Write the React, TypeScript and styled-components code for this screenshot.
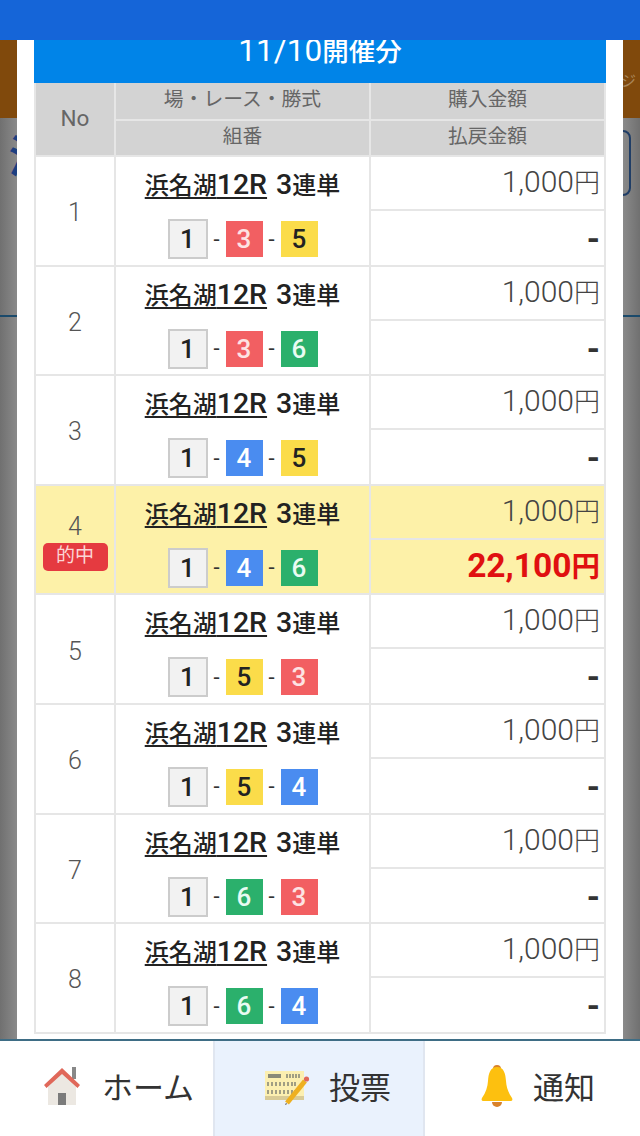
import React from "react";
import styled, { createGlobalStyle } from "styled-components";

const FONT = `Roboto, "Noto Sans CJK JP", sans-serif`;
const LINE = "#e6e6e6";

const Global = createGlobalStyle`
  html, body { margin: 0; padding: 0; background: #808080; }
  * { box-sizing: border-box; }
`;

const Stage = styled.div`
  position: relative;
  width: 640px;
  height: 1136px;
  overflow: hidden;
  font-family: ${FONT};
  background: linear-gradient(90deg, #707070 0, #8a8a8a 17px, #8a8a8a 623px, #707070 640px);
  display: flex;
  flex-direction: column;
`;

const TopBar = styled.header`
  position: relative;
  z-index: 3;
  height: 40px;
  flex: none;
  background: #1565d8;
`;

const Band = styled.div`
  height: 78px;
  flex: none;
  background: #80490c;
  display: flex;
  justify-content: flex-end;
  align-items: center;
  padding-right: 4px;
  font-size: 15px;
  color: #a8855a;
`;

const BackHead = styled.div`
  height: 199px;
  flex: none;
  border-bottom: 2px solid #1b4a6b;
  display: flex;
  justify-content: space-between;
  padding: 12px 9px 0 9px;
`;

const BackTitle = styled.div`
  width: 40px;
  height: 66px;
  font-size: 44px;
  line-height: 56px;
  font-weight: 700;
  color: #1d3f80;
  border-bottom: 8px solid #1d3f80;
  border-image: linear-gradient(90deg, #1d3f80 8px, transparent 8px) 8;
`;

const BackButton = styled.div`
  width: 40px;
  height: 66px;
  border: 2px solid #1f3d66;
  border-radius: 8px;
`;

const Modal = styled.section`
  position: absolute;
  z-index: 2;
  top: 40px;
  left: 17px;
  width: 606px;
  height: 1000px;
  background: #fff;
  padding: 0 17px;
`;

const Title = styled.h2`
  margin: 0;
  height: 43px;
  padding-bottom: 2px;
  background: #0084e8;
  color: #fff;
  font-size: 26.5px;
  font-weight: 500;
  line-height: 22px;
  text-align: center;
`;

const TitleDate = styled.span`
  font-size: 31.5px;
  font-weight: 400;
`;

const Table = styled.div`
  border-left: 2px solid ${LINE};
  border-right: 2px solid ${LINE};
`;

const HeadRow = styled.div`
  display: grid;
  grid-template-columns: 78px 253px 1fr;
  grid-template-rows: 36px 34px;
  height: 74px;
  gap: 2px;
  background: ${LINE};
  border-bottom: 2px solid ${LINE};
`;

const HeadCell = styled.div<{ $tall?: boolean }>`
  background: #d3d3d3;
  color: #666;
  font-size: ${(p) => (p.$tall ? "22.5px" : "19.8px")};
  display: flex;
  align-items: center;
  justify-content: center;
  padding-bottom: ${(p) => (p.$tall ? "2px" : "8px")};
  grid-row: ${(p) => (p.$tall ? "span 2" : "auto")};
`;

const Row = styled.div<{ $hit?: boolean }>`
  display: grid;
  grid-template-columns: 78px 253px 1fr;
  column-gap: 2px;
  height: 109.6px;
  background: ${LINE};
  border-bottom: 2px solid ${LINE};
  --cell: ${(p) => (p.$hit ? "#fdf1a8" : "#fff")};
`;

const NoCell = styled.div`
  background: var(--cell);
  display: flex;
  flex-direction: column;
  align-items: center;
  justify-content: center;
  padding-top: 4px;
  color: #555;
  font-size: 25px;
  font-weight: 300;
`;

const HitBadge = styled.span`
  width: 65px;
  height: 28px;
  margin-top: 2px;
  margin-bottom: 1px;
  border-radius: 5px;
  background: #e53a40;
  color: #fbd5d5;
  font-size: 19px;
  font-weight: 400;
  line-height: 25px;
  text-align: center;
`;

const RaceCell = styled.div`
  background: var(--cell);
  display: flex;
  flex-direction: column;
  align-items: center;
  padding-top: 11px;
`;

const RaceLine = styled.div`
  height: 34px;
  font-size: 24px;
  line-height: 34px;
  font-weight: 500;
  color: #222;
  white-space: nowrap;
`;

const RaceLink = styled.span`
  text-decoration: underline;
  text-underline-offset: 3px;
  margin-right: 9px;
`;

const RaceLatin = styled.span`
  font-size: 28.5px;
  font-weight: 500;
`;

const Boats = styled.div`
  margin-top: 17px;
  display: flex;
  align-items: center;
  height: 40px;
`;

const Dash = styled.span`
  width: 18px;
  text-align: center;
  font-size: 22px;
  color: #333;
`;

const BOAT: Record<string, { bg: string; fg: string }> = {
  "3": { bg: "#f25f62", fg: "#fde3e3" },
  "4": { bg: "#4a8cf0", fg: "#fff" },
  "5": { bg: "#fbdc4a", fg: "#222" },
  "6": { bg: "#2bb06c", fg: "#e9fbf2" },
};

const FirstBoat = styled.span`
  width: 40px;
  height: 40px;
  border: 2px solid #ccc;
  background: #f2f2f2;
  color: #222;
  font-size: 26px;
  font-weight: 500;
  display: flex;
  align-items: center;
  justify-content: center;
`;

const Boat = styled.span<{ $n: string }>`
  width: 37px;
  height: 36px;
  background: ${(p) => BOAT[p.$n].bg};
  color: ${(p) => BOAT[p.$n].fg};
  font-size: 26px;
  font-weight: 500;
  display: flex;
  align-items: center;
  justify-content: center;
`;

const AmountCell = styled.div`
  display: grid;
  grid-template-rows: 52px 1fr;
  row-gap: 2px;
`;

const Amount = styled.div`
  background: var(--cell);
  display: flex;
  justify-content: flex-end;
  align-items: baseline;
  padding: 7px 4px 0 0;
  color: #444;
  font-size: 26px;
  line-height: 36px;
  font-weight: 300;
`;

const AmountLatin = styled.span`
  font-size: 30px;
`;

const Payout = styled.div`
  background: var(--cell);
  display: flex;
  justify-content: flex-end;
  align-items: baseline;
  padding: 9px 4px 0 0;
  color: #333;
  font-size: 28.5px;
  line-height: 38px;
  font-weight: 700;
`;

const PayoutHit = styled(Payout)`
  padding-top: 7px;
  color: #e01010;
`;

const PayoutLatin = styled.span`
  font-size: 33.5px;
`;

const Nav = styled.nav`
  position: absolute;
  z-index: 3;
  left: 0;
  right: 0;
  bottom: 0;
  height: 97px;
  background: #fff;
  border-top: 2px solid #3e6d85;
  display: grid;
  grid-template-columns: 213px 212px 1fr;
`;

const Tab = styled.div<{ $active?: boolean; $gap: number; $pad: number }>`
  display: flex;
  align-items: center;
  gap: ${(p) => p.$gap}px;
  padding-left: ${(p) => p.$pad}px;
  padding-bottom: 6px;
  background: ${(p) => (p.$active ? "#eaf2fd" : "#fff")};
  border-left: ${(p) => (p.$active ? "2px solid #e0e6f0" : "none")};
  border-right: ${(p) => (p.$active ? "2px solid #e0e6f0" : "none")};
  color: #333;
  font-size: 31px;
`;

const HouseIcon = () => (
  <svg width="38" height="41" viewBox="0 0 38 41">
    <rect x="29" y="2" width="4" height="12" fill="#888" />
    <path d="M5 19 19 7 33 19V40H5Z" fill="#ece8e2" />
    <path d="M1 20 19 3 37 20 34.5 23 19 9 3.5 23Z" fill="#e0685a" />
    <rect x="15" y="28" width="8" height="12" fill="#7b7b7b" />
  </svg>
);

const TicketIcon = () => (
  <svg width="46" height="38" viewBox="0 -3 46 38">
    <rect x="1" y="1" width="39" height="29" fill="#fcefb0" />
    <rect x="1" y="26" width="39" height="4" fill="#d9cb96" />
    <rect x="4" y="4" width="13" height="4" fill="#8a8a78" />
    <path d="M23 4v4M26 4v4M29 4v4M32 4v4M35 4v4M4 12v4M8 12v4M12 12v4M16 12v4M20 12v4M24 12v4M28 12v4M31 12v4M4 20v4M8 20v4M12 20v4M16 20v4M20 20v4M24 20v4M28 20v4M31 20v4" stroke="#8a8a78" strokeWidth="1.6" />
    <path d="M23 33 41 11" stroke="#eeb020" strokeWidth="5" />
    <circle cx="42.5" cy="9" r="2.6" fill="#e0685a" />
    <path d="M21 35l1-2 1 1Z" fill="#333" />
  </svg>
);

const BellIcon = () => (
  <svg width="32" height="44" viewBox="0 0 32 44">
    <path d="M11 38a5 5 0 0 0 10 0Z" fill="#d9822b" />
    <path d="M12 5a4 4 0 0 1 8 0Z" fill="#d9822b" />
    <path d="M16 3C9 3 7.5 10 7 17c-.4 6-2 11-6 17-1 2 0 3 2 3h26c2 0 3-1 2-3-4-6-5.600-11-6-17-.5-7-2-14-9-14Z" fill="#fdc00f" />
  </svg>
);

type Entry = { boats: [string, string]; hit?: boolean };
const ENTRIES: Entry[] = [
  { boats: ["3", "5"] },
  { boats: ["3", "6"] },
  { boats: ["4", "5"] },
  { boats: ["4", "6"], hit: true },
  { boats: ["5", "3"] },
  { boats: ["5", "4"] },
  { boats: ["6", "3"] },
  { boats: ["6", "4"] },
];

export default function App() {
  return (
    <Stage>
      <Global />
      <TopBar />
      <Band>ジ</Band>
      <BackHead>
        <BackTitle>浜</BackTitle>
        <BackButton />
      </BackHead>
      <Modal>
        <Title>
          <TitleDate>11/10</TitleDate>開催分
        </Title>
        <Table>
          <HeadRow>
            <HeadCell $tall>No</HeadCell>
            <HeadCell>場・レース・勝式</HeadCell>
            <HeadCell>購入金額</HeadCell>
            <HeadCell>組番</HeadCell>
            <HeadCell>払戻金額</HeadCell>
          </HeadRow>
          {ENTRIES.map((e, i) => (
            <Row key={i} $hit={e.hit}>
              <NoCell>
                {i + 1}
                {e.hit && <HitBadge>的中</HitBadge>}
              </NoCell>
              <RaceCell>
                <RaceLine>
                  <RaceLink>
                    浜名湖<RaceLatin>12R</RaceLatin>
                  </RaceLink>
                  <RaceLatin>3</RaceLatin>連単
                </RaceLine>
                <Boats>
                  <FirstBoat>1</FirstBoat>
                  <Dash>-</Dash>
                  <Boat $n={e.boats[0]}>{e.boats[0]}</Boat>
                  <Dash>-</Dash>
                  <Boat $n={e.boats[1]}>{e.boats[1]}</Boat>
                </Boats>
              </RaceCell>
              <AmountCell>
                <Amount>
                  <AmountLatin>1,000</AmountLatin>円
                </Amount>
                {e.hit ? (
                  <PayoutHit>
                    <PayoutLatin>22,100</PayoutLatin>円
                  </PayoutHit>
                ) : (
                  <Payout>
                    <PayoutLatin>-</PayoutLatin>
                  </Payout>
                )}
              </AmountCell>
            </Row>
          ))}
        </Table>
      </Modal>
      <Nav>
        <Tab $gap={21} $pad={43}>
          <HouseIcon />
          ホーム
        </Tab>
        <Tab $active $gap={19} $pad={49}>
          <TicketIcon />
          投票
        </Tab>
        <Tab $gap={20} $pad={56}>
          <BellIcon />
          通知
        </Tab>
      </Nav>
    </Stage>
  );
}
